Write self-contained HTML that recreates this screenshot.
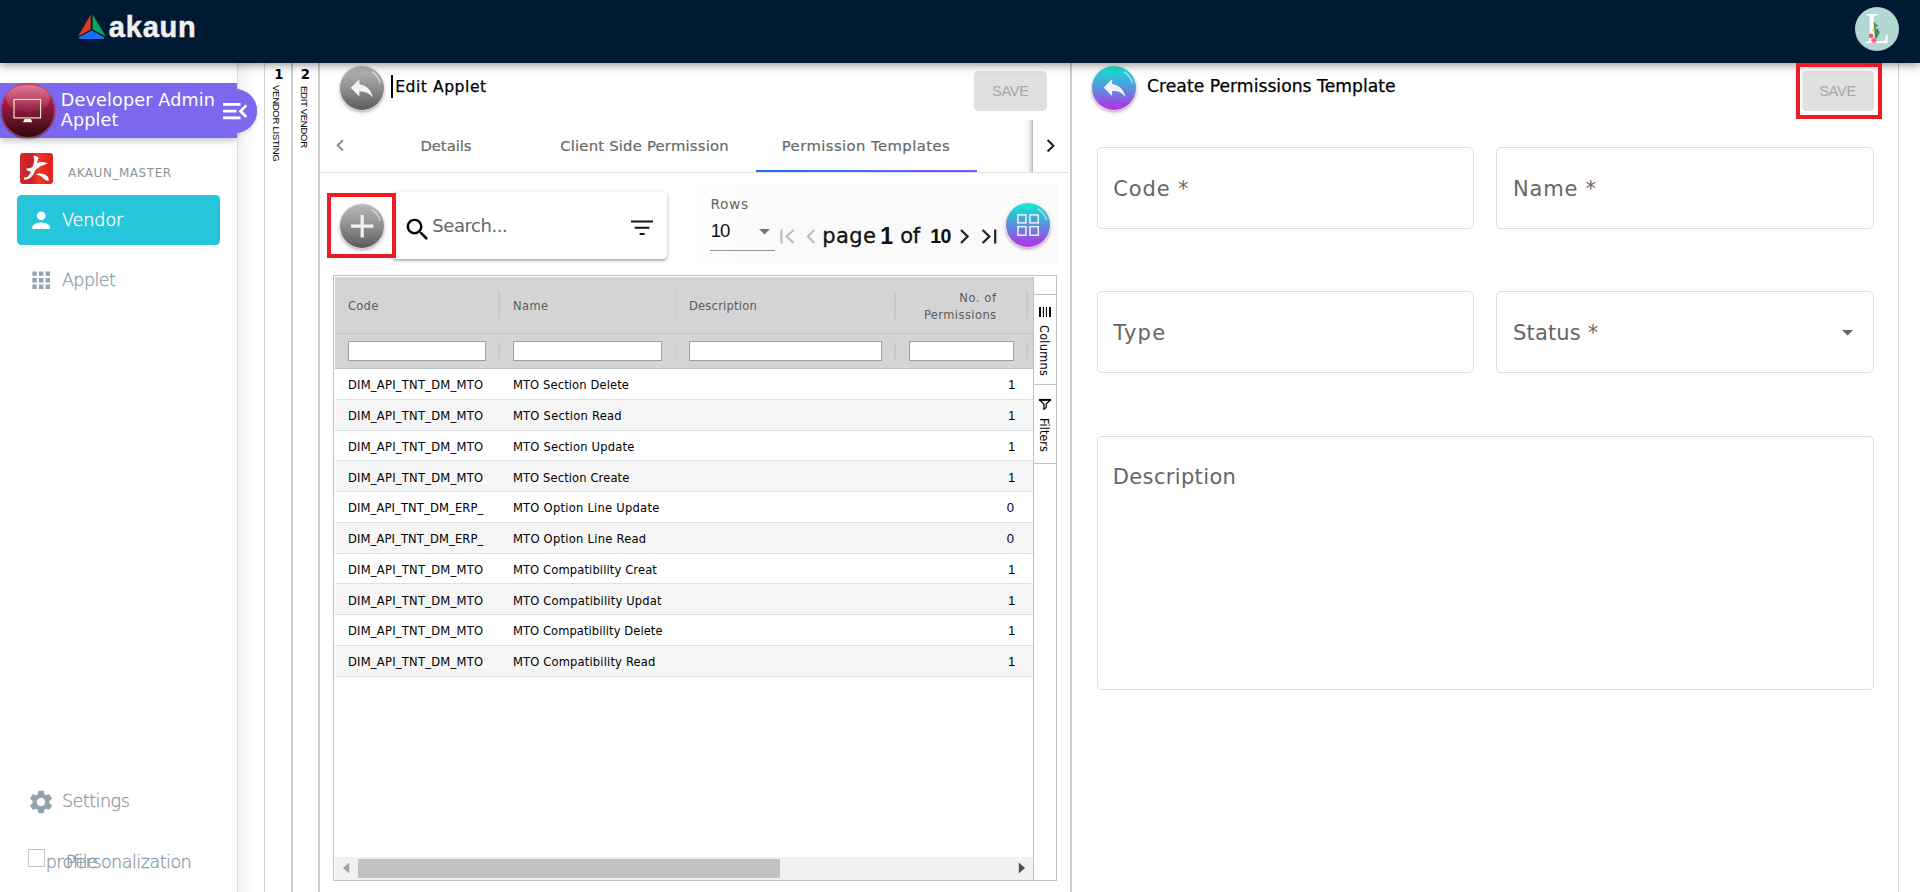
<!DOCTYPE html>
<html lang="en">
<head>
<meta charset="utf-8">
<title>akaun - Developer Admin Applet</title>
<style>
*{box-sizing:border-box;margin:0;padding:0}
html,body{width:1920px;height:892px;overflow:hidden;background:#fff}
body{position:relative;font-family:"DejaVu Sans","Liberation Sans",sans-serif;color:#000}
.abs{position:absolute}
.t{position:absolute;white-space:pre;line-height:1}
svg{position:absolute;overflow:visible}
#hdr{left:0;top:0;width:1920px;height:62.5px;background:#011a33;box-shadow:0 2px 9px rgba(0,0,0,.42);z-index:20}
#side{left:0;top:62px;width:238px;height:830px;background:#fff;border-right:1px solid #dcdcdc}
.vline{position:absolute;top:62px;height:830px;width:2px;background:#cfcfcf}
.vtxt{position:absolute;white-space:nowrap;transform-origin:0 0;transform:rotate(90deg);font-family:"Liberation Sans","DejaVu Sans",sans-serif;line-height:1;color:#000}
.circ{position:absolute;width:44px;height:44px;border-radius:50%;box-shadow:0 0 0 .8px rgba(245,225,240,.95),0 2px 3.5px rgba(40,20,40,.42);overflow:hidden}
.grayc{background:linear-gradient(180deg,#b9b9b9 0%,#8f8f8f 50%,#5c5c5c 100%)}
.gradc{background:linear-gradient(180deg,#0cf0d0 0%,#2cc4d6 22%,#4f9cdb 45%,#7a6fe0 68%,#a043e6 88%,#b432e8 100%)}
.savebtn{position:absolute;background:#e0e0e0;border-radius:4.4px}
.redbox{position:absolute;border:4.4px solid #ed1c24;z-index:30}
.field{position:absolute;border:1px solid #dedede;border-radius:5px;background:#fff}
.hsep{position:absolute;width:1.5px;background:#c3c9cc}
.finp{position:absolute;top:341.2px;height:19.6px;background:#fff;border:1px solid #95a5a6}
.row{position:absolute;left:335px;width:698px;height:30.78px;border-bottom:1px solid #dde2e6;background:#fff}
.row.alt{background:#f5f5f5}
</style>
</head>
<body>
<div id="hdr" class="abs">
  <svg style="left:76px;top:12px" width="32" height="30" viewBox="76 12 32 30">
    <polygon points="90.7,14.4 78,36.6 90.7,29.4" fill="#d63c28"/>
    <polygon points="92.5,14.4 105.8,36.4 92.5,29.2" fill="#0aa45c"/>
    <polygon points="91.6,30.6 104.6,37.6 103.6,39 79.6,39 78.6,37.6" fill="#1a6ef0"/>
  </svg>
  <span class="t" style="left:108.8px;top:13.1px;font-family:'Liberation Sans','DejaVu Sans',sans-serif;font-size:29px;font-weight:700;color:#f0f0f0;letter-spacing:0.80px;-webkit-text-stroke:.5px #f0f0f0;">akaun</span>
  <div class="abs" style="left:1855px;top:7px;width:44px;height:44px;border-radius:50%;background:#b2d8d4;overflow:hidden">
    <span class="t" style="left:10.2px;top:-.8px;font-family:'Liberation Serif','DejaVu Serif',serif;font-size:44.5px;color:#fff;transform:scaleX(.92);transform-origin:0 0">L</span>
    <svg style="left:.8px;top:0" width="44" height="44" viewBox="0 0 44 44">
      <path d="M18.5 16 L20 30 M21.5 22 L19.5 31 M23 25 L20 31" stroke="#3f8f3a" stroke-width="1.6" fill="none" stroke-linecap="round"/>
      <circle cx="20.6" cy="18.5" r="1.1" fill="#3f51b5"/><circle cx="21.6" cy="24" r="1" fill="#3f51b5"/>
      <circle cx="16.8" cy="23.6" r="1" fill="#f7d23c"/>
      <circle cx="15" cy="28.8" r="2.2" fill="#e8506a"/>
      <circle cx="18" cy="33.2" r="2.9" fill="#f08a9a"/><circle cx="18" cy="33.2" r="1.3" fill="#e8506a"/>
    </svg>
  </div>
</div>
<div id="side" class="abs"></div>
<div class="abs" style="left:238px;top:62px;width:26px;height:830px;background:linear-gradient(90deg,#f1f1f1 0,#fafafa 8px,#fff 19px)"></div>
<div class="abs" style="left:212.6px;top:88.7px;width:44.2px;height:44.2px;border-radius:50%;background:#7b68ee;box-shadow:0 2px 4px rgba(0,0,0,.12)"></div>
<div class="abs" style="left:0;top:83px;width:237.4px;height:54.8px;background:#7b68ee;box-shadow:0 4px 6px -1px rgba(40,60,80,.28)"></div>
<div class="abs" style="left:212.6px;top:88.7px;width:44.2px;height:44.2px;border-radius:50%;background:#7b68ee"></div>
<div class="abs" style="left:.6px;top:83px;width:54.4px;height:54.6px;border-radius:50%;background:linear-gradient(180deg,#cf3f68 0%,#b02249 28%,#84163a 52%,#55101f 76%,#2a070d 100%);box-shadow:inset 0 0 0 1px rgba(214,70,110,.75),0 1px 2px rgba(0,0,0,.4);overflow:hidden">
  <div class="abs" style="left:5px;top:2px;width:44px;height:27px;border-radius:50%;background:linear-gradient(180deg,rgba(255,255,255,.33),rgba(255,255,255,.04))"></div>
</div>
<svg style="left:0;top:83px" width="56" height="56" viewBox="0 83 56 56">
  <rect x="14" y="99.5" width="26.6" height="18.4" fill="none" stroke="#f6f0bb" stroke-width="1.15"/>
  <polygon points="24.6,119 30.8,119 32.4,122.2 23,122.2" fill="#fbf8e4"/>
</svg>
<span class="t" style="left:60.8px;top:91.6px;font-family:'DejaVu Sans','Liberation Sans',sans-serif;font-size:17.6px;color:#fff;letter-spacing:0.14px;">Developer Admin</span>
<span class="t" style="left:60.8px;top:111.7px;font-family:'DejaVu Sans','Liberation Sans',sans-serif;font-size:17.6px;color:#fff;letter-spacing:0.12px;">Applet</span>
<svg style="left:218.9px;top:94.8px" width="32.3" height="32.3" viewBox="0 0 24 24"><path fill="#fff" d="M3 18h13v-2H3v2zm0-5h10v-2H3v2zm0-7v2h13V6H3zm18 9.59L17.42 12 21 8.41 19.59 7l-5 5 5 5L21 15.59z"/></svg>
<div class="abs" style="left:20.2px;top:152.5px;width:32.7px;height:31.5px;border-radius:3px;background:linear-gradient(90deg,#cc2a2e 0%,#cb2027 32%,#ec3a24 56%,#e92623 80%,#e52224 100%)"></div>
<svg style="left:20.2px;top:152.5px" width="32.7" height="31.5" viewBox="0 0 32.7 31.5" fill="#fff">
  <path d="M13.4 2.7 C15.6 2.4 18.2 3.6 18.8 5 C17.6 6.8 17.4 8.6 17.2 10.6 C16.8 14.2 15.6 17.6 13.8 20.4 C12.4 22.8 11 24.4 9.4 25.4 C7.6 26.4 5.2 26.9 3.7 26.4 C4.2 25.2 4.7 24.4 5.1 23.5 C5.5 24.3 5.8 24.8 6.3 24.7 C8 23.8 9.6 21.8 10.6 19.6 C12 16.4 13.2 12.6 14.2 8.4 C14.6 6.6 14 4.6 13.4 2.7 Z"/>
  <path d="M5.8 16.1 C7.2 15.6 9.4 15.4 11.2 14.6 C14 13.2 16.6 10.4 19.4 9.3 C22 8.6 25.4 9.4 27.9 10.5 C25.4 11.3 23 12 21 13.1 C18.6 14.4 16.6 16.2 14.4 17.4 C12.4 18.4 10 18.6 8.8 18.2 C7.6 17.8 6.4 16.9 5.8 16.1 Z"/>
  <path d="M15.8 21.2 C18 20.4 21 20.4 23.4 21.1 C25.6 21.8 27.4 23 28.2 24.6 C28.8 25.8 28.9 27 28.6 28 C27.2 27.7 26 27.2 24.8 26.4 C22.8 25.2 21.4 23.6 19.6 22.6 C18.4 22 17 21.6 15.8 21.2 Z"/>
</svg>
<span class="t" style="left:67.9px;top:166.6px;font-family:'DejaVu Sans','Liberation Sans',sans-serif;font-size:12px;color:#8a9599;letter-spacing:0.54px;">AKAUN_MASTER</span>
<div class="abs" style="left:17px;top:195px;width:203px;height:50px;border-radius:4.4px;background:#26c6da"></div>
<svg style="left:27.8px;top:206.8px" width="26.4" height="26.4" viewBox="0 0 24 24"><path fill="#fff" d="M12 12c2.21 0 4-1.79 4-4s-1.790-4-4-4-4 1.790-4 4 1.790 4 4 4zm0 2c-2.670 0-8 1.340-8 4v2h16v-2c0-2.660-5.330-4-8-4z"/></svg>
<span class="t" style="left:61.9px;top:211.8px;font-family:'DejaVu Sans Light','DejaVu Sans','Liberation Sans',sans-serif;font-size:17.6px;color:#fff;letter-spacing:-0.07px;-webkit-text-stroke:.35px #fff;">Vendor</span>
<svg style="left:27.8px;top:266.8px" width="26.4" height="26.4" viewBox="0 0 24 24"><path fill="#90a4ae" d="M4 8h4V4H4v4zm6 12h4v-4h-4v4zm-6 0h4v-4H4v4zm0-6h4v-4H4v4zm6 0h4v-4h-4v4zm6-10v4h4V4h-4zm-6 4h4V4h-4v4zm6 6h4v-4h-4v4zm0 6h4v-4h-4v4z"/></svg>
<span class="t" style="left:61.9px;top:272.0px;font-family:'DejaVu Sans Light','DejaVu Sans','Liberation Sans',sans-serif;font-size:17.6px;color:#8b9aa3;letter-spacing:-0.60px;-webkit-text-stroke:.3px #8b9aa3;">Applet</span>
<svg style="left:27px;top:787.9px" width="28" height="28" viewBox="0 0 24 24"><path fill="#90a4ae" d="M19.140 12.940c.040-.300.060-.610.060-.940 0-.320-.020-.640-.070-.940l2.030-1.580c.180-.140.230-.410.120-.610l-1.920-3.320c-.120-.220-.370-.290-.590-.220l-2.390.960c-.500-.380-1.030-.700-1.620-.940l-.360-2.540c-.040-.240-.240-.410-.480-.410h-3.840c-.240 0-.430.170-.470.410l-.360 2.540c-.590.240-1.130.570-1.620.940l-2.390-.960c-.220-.080-.470 0-.590.220L2.740 8.870c-.120.210-.080.470.120.610l2.030 1.580c-.050.300-.090.630-.090.940s.020.640.070.940l-2.030 1.580c-.180.140-.230.410-.120.610l1.920 3.320c.120.220.370.290.590.220l2.390-.960c.500.380 1.030.700 1.620.940l.360 2.540c.050.240.240.410.480.410h3.840c.240 0 .440-.170.470-.410l.360-2.540c.590-.240 1.130-.560 1.620-.940l2.390.960c.220.080.470 0 .590-.220l1.920-3.320c.120-.220.070-.470-.120-.610l-2.010-1.580zM12 15.600c-1.980 0-3.600-1.620-3.600-3.600s1.620-3.600 3.600-3.600 3.600 1.620 3.600 3.600-1.620 3.600-3.600 3.600z"/></svg>
<span class="t" style="left:61.9px;top:793.0px;font-family:'DejaVu Sans Light','DejaVu Sans','Liberation Sans',sans-serif;font-size:17.6px;color:#8b9aa3;letter-spacing:-0.52px;-webkit-text-stroke:.3px #8b9aa3;">Settings</span>
<div class="abs" style="left:28.2px;top:849px;width:16.6px;height:17.6px;border:1px solid #c4c4c4;background:#fff"></div>
<span class="t" style="left:45.8px;top:854.0px;font-family:'DejaVu Sans Light','DejaVu Sans','Liberation Sans',sans-serif;font-size:17.6px;color:#8b9aa3;letter-spacing:-0.60px;-webkit-text-stroke:.3px #8b9aa3;">profile</span>
<span class="t" style="left:65.8px;top:854.0px;font-family:'DejaVu Sans Light','DejaVu Sans','Liberation Sans',sans-serif;font-size:17.6px;color:#8b9aa3;letter-spacing:-0.53px;-webkit-text-stroke:.3px #8b9aa3;">Personalization</span>

<div class="vline" style="left:264px;width:1px;background:#d2d2d2"></div><div class="vline" style="left:291px"></div>
<span class="t" style="left:274.3px;top:67.6px;font-family:'DejaVu Sans','Liberation Sans',sans-serif;font-size:13.2px;font-weight:700;">1</span>
<span class="t" style="left:300.8px;top:67.6px;font-family:'DejaVu Sans','Liberation Sans',sans-serif;font-size:13.2px;font-weight:700;">2</span>
<span class="vtxt" style="left:281.3px;top:84.6px;font-size:9.6px;letter-spacing:-.33px">VENDOR LISTING</span>
<span class="vtxt" style="left:309.2px;top:85.8px;font-size:9.6px;letter-spacing:-.33px">EDIT VENDOR</span>

<div class="abs" style="left:318px;top:62px;width:752px;height:830px;background:#fff;border-left:2px solid #cfcfcf"></div>
<div class="circ grayc" style="left:340px;top:66px"><svg style="left:0;top:0" width="44" height="44" viewBox="0 0 44 44"><path d="M32.3 6.1 A19 19 0 0 1 40.2 16.4" fill="none" stroke="rgba(255,255,255,.55)" stroke-width="1.5" stroke-linecap="round"/></svg></div>
<svg style="left:347.3px;top:72.6px" width="29.7" height="29.7" viewBox="0 0 24 24"><path fill="#f2f2f2" d="M10 9V5l-7 7 7 7v-4.1c5 0 8.5 1.6 11 5.1-1-5-4-10-11-11z"/></svg>
<div class="abs" style="left:390.6px;top:75.2px;width:2px;height:22.4px;background:#000"></div>
<span class="t" style="left:395.2px;top:79.6px;font-family:'DejaVu Sans','Liberation Sans',sans-serif;font-size:15.6px;letter-spacing:0.53px;-webkit-text-stroke:.25px #000;">Edit Applet</span>
<div class="savebtn" style="left:974.2px;top:71.2px;width:72.8px;height:39.5px"></div>
<span class="t" style="left:992.0px;top:84.3px;font-family:'Liberation Sans','DejaVu Sans',sans-serif;font-size:14.6px;color:#a8a8a8;letter-spacing:-0.27px;">SAVE</span>
<svg style="left:334px;top:138px" width="14" height="16" viewBox="334 138 14 16"><path d="M343 140.2 L337.6 145.3 L343 150.4" fill="none" stroke="#8e8e8e" stroke-width="2"/></svg>
<span class="t" style="left:420.4px;top:138.8px;font-family:'DejaVu Sans','Liberation Sans',sans-serif;font-size:14.8px;color:#6a6a6a;letter-spacing:-0.02px;-webkit-text-stroke:.2px #6a6a6a;">Details</span>
<span class="t" style="left:560.2px;top:138.8px;font-family:'DejaVu Sans','Liberation Sans',sans-serif;font-size:14.8px;color:#6a6a6a;letter-spacing:0.21px;-webkit-text-stroke:.2px #6a6a6a;">Client Side Permission</span>
<span class="t" style="left:781.8px;top:138.8px;font-family:'DejaVu Sans','Liberation Sans',sans-serif;font-size:14.8px;color:#6a6a6a;letter-spacing:0.43px;-webkit-text-stroke:.2px #6a6a6a;">Permission Templates</span>
<div class="abs" style="left:321px;top:172px;width:747px;height:1px;background:#e0e0e0"></div>
<div class="abs" style="left:756px;top:169.8px;width:221px;height:2.2px;background:linear-gradient(90deg,#1a73e8 0%,#4a6cf0 50%,#8257ee 100%)"></div>
<div class="abs" style="left:1021px;top:119.5px;width:12px;height:52.5px;background:linear-gradient(90deg,rgba(0,0,0,0) 0,rgba(0,0,0,.035) 60%,rgba(0,0,0,.2) 92%,rgba(0,0,0,.32) 100%)"></div><div class="abs" style="left:1033px;top:119.5px;width:35px;height:52.5px;background:#fff"></div>
<svg style="left:1043px;top:137px" width="16" height="18" viewBox="1042 137 16 18"><path d="M1046.6 140 L1052.4 145.7 L1046.6 151.4" fill="none" stroke="#222" stroke-width="2.1"/></svg>

<div class="abs" style="left:668px;top:184px;width:389px;height:80px;background:linear-gradient(90deg,rgba(250,250,250,0) 12px,#fafafa 100px)"></div>
<div class="abs" style="left:392px;top:192.4px;width:275.4px;height:66.6px;border-radius:4.4px;background:#fff;box-shadow:0 2px 2px rgba(0,0,0,.2),0 1px 5px rgba(0,0,0,.17)"></div>
<div class="abs" style="left:327.4px;top:192.5px;width:68.4px;height:65px;background:#fff"></div><div class="redbox" style="left:327.4px;top:192.5px;width:68.4px;height:65px"></div>
<div class="circ grayc" style="left:339.9px;top:203.8px"><svg style="left:0;top:0" width="44" height="44" viewBox="0 0 44 44"><path d="M32.3 6.1 A19 19 0 0 1 40.2 16.4" fill="none" stroke="rgba(255,255,255,.55)" stroke-width="1.5" stroke-linecap="round"/></svg></div>
<svg style="left:342.7px;top:206.6px" width="38.4" height="38.4" viewBox="0 0 24 24"><path fill="#f2f2f2" d="M19 13h-6v6h-2v-6H5v-2h6V5h2v6h6v2z"/></svg>
<svg style="left:403.3px;top:215.4px" width="29.2" height="29.2" viewBox="0 0 24 24"><path fill="#000" d="M15.5 14h-.79l-.28-.27C15.410 12.590 16 11.110 16 9.500 16 5.910 13.090 3 9.500 3S3 5.910 3 9.500 5.910 16 9.500 16c1.610 0 3.090-.590 4.230-1.570l.27.280v.79l5 4.990L20.490 19l-4.990-5zm-6 0C7.010 14 5 11.990 5 9.500S7.010 5 9.500 5 14 7.010 14 9.500 11.990 14 9.500 14z"/></svg>
<span class="t" style="left:432.3px;top:217.0px;font-family:'DejaVu Sans','Liberation Sans',sans-serif;font-size:18px;color:#666;letter-spacing:-0.44px;">Search...</span>
<svg style="left:630px;top:219px" width="24" height="18" viewBox="630 219 24 18"><path fill="#111" d="M631 220.6h22v1.9h-22z M634.7 226.8h14.7v1.9h-14.7z M639.6 233.1h5v1.9h-5z"/></svg>
<span class="t" style="left:710.4px;top:198.1px;font-family:'DejaVu Sans','Liberation Sans',sans-serif;font-size:13.8px;color:#666;letter-spacing:0.60px;">Rows</span>
<span class="t" style="left:710.7px;top:222.4px;font-family:'Liberation Sans','DejaVu Sans',sans-serif;font-size:18.6px;color:#111;letter-spacing:-1.00px;">10</span>
<svg style="left:759.3px;top:229px" width="11" height="5.5" viewBox="0 0 10 5"><path d="M0 0h10L5 5z" fill="#777"/></svg>
<div class="abs" style="left:710px;top:250px;width:65px;height:1px;background:#949494"></div>
<svg style="left:778px;top:227px" width="220" height="20" viewBox="778 227 220 20" fill="none" stroke-width="2.2">
  <path d="M781.4 229.6V243.4 M793.6 230 L786.6 236.5 L793.6 243" stroke="#bdbdbd"/>
  <path d="M814.4 230 L807.8 236.5 L814.4 243" stroke="#bdbdbd"/>
  <path d="M961 230 L967.6 236.5 L961 243" stroke="#222"/>
  <path d="M982.6 230 L989.4 236.5 L982.6 243 M995.2 229.6V243.4" stroke="#222"/>
</svg>
<span class="t" style="left:822.2px;top:226.4px;font-family:'DejaVu Sans','Liberation Sans',sans-serif;font-size:21px;color:#111;letter-spacing:0.41px;-webkit-text-stroke:.3px #111;">page</span>
<span class="t" style="left:880.3px;top:224.6px;font-family:'Liberation Sans','DejaVu Sans',sans-serif;font-size:23.2px;font-weight:700;color:#111;">1</span>
<span class="t" style="left:900.2px;top:226.4px;font-family:'DejaVu Sans','Liberation Sans',sans-serif;font-size:21px;color:#111;letter-spacing:-0.29px;-webkit-text-stroke:.3px #111;">of</span>
<span class="t" style="left:930.2px;top:227.4px;font-family:'Liberation Sans','DejaVu Sans',sans-serif;font-size:19.6px;font-weight:700;color:#111;letter-spacing:-0.66px;">10</span>
<div class="circ gradc" style="left:1006.2px;top:202.9px"><svg style="left:0;top:0" width="44" height="44" viewBox="0 0 44 44"><path d="M32.3 6.1 A19 19 0 0 1 40.2 16.4" fill="none" stroke="rgba(255,255,255,.55)" stroke-width="1.5" stroke-linecap="round"/></svg></div>
<svg style="left:1014px;top:212px" width="28" height="28" viewBox="1014 212 28 28" fill="none" stroke="#f4f1ff" stroke-width="1.45">
  <rect x="1017.9" y="214.9" width="8" height="8"/><rect x="1029.9" y="214.9" width="8.4" height="8"/>
  <rect x="1017.9" y="226.7" width="8" height="8.5"/><rect x="1029.9" y="226.7" width="8.4" height="8.5"/>
</svg>

<div class="abs" style="left:333px;top:275px;width:724px;height:606px;border:1px solid #bdc3c7;background:#fff"></div>
<div class="abs" style="left:335px;top:277px;width:698px;height:92px;background:#d4d4d4;border-bottom:1px solid #bdc3c7"></div>
<div class="abs" style="left:335px;top:333px;width:698px;height:1px;background:#bdc3c7"></div>
<div class="hsep" style="left:498.2px;top:291px;height:28px"></div>
<div class="hsep" style="left:498.2px;top:342.5px;height:16px"></div>
<div class="hsep" style="left:674.6px;top:291px;height:28px"></div>
<div class="hsep" style="left:674.6px;top:342.5px;height:16px"></div>
<div class="hsep" style="left:894.2px;top:291px;height:28px"></div>
<div class="hsep" style="left:894.2px;top:342.5px;height:16px"></div>
<div class="hsep" style="left:1026.4px;top:291px;height:28px"></div>
<div class="hsep" style="left:1026.4px;top:342.5px;height:16px"></div>
<div class="finp" style="left:348px;width:137.8px"></div>
<div class="finp" style="left:513px;width:148.8px"></div>
<div class="finp" style="left:689.2px;width:192.6px"></div>
<div class="finp" style="left:909px;width:104.8px"></div>
<span class="t" style="left:347.9px;top:300.0px;font-family:'DejaVu Sans Condensed','Liberation Sans',sans-serif;font-size:12.8px;color:#5c5c5c;letter-spacing:0.28px;">Code</span>
<span class="t" style="left:512.9px;top:300.0px;font-family:'DejaVu Sans Condensed','Liberation Sans',sans-serif;font-size:12.8px;color:#5c5c5c;letter-spacing:0.41px;">Name</span>
<span class="t" style="left:688.9px;top:300.0px;font-family:'DejaVu Sans Condensed','Liberation Sans',sans-serif;font-size:12.8px;color:#5c5c5c;letter-spacing:0.24px;">Description</span>
<span class="t" style="left:959.3px;top:292.0px;font-family:'DejaVu Sans Condensed','Liberation Sans',sans-serif;font-size:12.8px;color:#5c5c5c;letter-spacing:0.56px;">No. of</span>
<span class="t" style="left:923.9px;top:308.7px;font-family:'DejaVu Sans Condensed','Liberation Sans',sans-serif;font-size:12.8px;color:#5c5c5c;letter-spacing:0.42px;">Permissions</span>
<div class="row" style="top:369.00px"></div>
<span class="t" style="left:347.9px;top:379.2px;font-family:'DejaVu Sans Condensed','Liberation Sans',sans-serif;font-size:12.8px;letter-spacing:0.25px;">DIM_API_TNT_DM_MTO</span>
<span class="t" style="left:512.9px;top:379.2px;font-family:'DejaVu Sans Condensed','Liberation Sans',sans-serif;font-size:12.8px;letter-spacing:0.12px;">MTO Section Delete</span>
<span class="t" style="left:1008.1px;top:378.2px;font-family:'Liberation Sans','DejaVu Sans',sans-serif;font-size:13px;">1</span>
<div class="row alt" style="top:399.78px"></div>
<span class="t" style="left:347.9px;top:410.0px;font-family:'DejaVu Sans Condensed','Liberation Sans',sans-serif;font-size:12.8px;letter-spacing:0.25px;">DIM_API_TNT_DM_MTO</span>
<span class="t" style="left:512.9px;top:410.0px;font-family:'DejaVu Sans Condensed','Liberation Sans',sans-serif;font-size:12.8px;letter-spacing:0.25px;">MTO Section Read</span>
<span class="t" style="left:1008.1px;top:409.0px;font-family:'Liberation Sans','DejaVu Sans',sans-serif;font-size:13px;">1</span>
<div class="row" style="top:430.56px"></div>
<span class="t" style="left:347.9px;top:440.8px;font-family:'DejaVu Sans Condensed','Liberation Sans',sans-serif;font-size:12.8px;letter-spacing:0.25px;">DIM_API_TNT_DM_MTO</span>
<span class="t" style="left:512.9px;top:440.8px;font-family:'DejaVu Sans Condensed','Liberation Sans',sans-serif;font-size:12.8px;letter-spacing:0.21px;">MTO Section Update</span>
<span class="t" style="left:1008.1px;top:439.8px;font-family:'Liberation Sans','DejaVu Sans',sans-serif;font-size:13px;">1</span>
<div class="row alt" style="top:461.34px"></div>
<span class="t" style="left:347.9px;top:471.5px;font-family:'DejaVu Sans Condensed','Liberation Sans',sans-serif;font-size:12.8px;letter-spacing:0.25px;">DIM_API_TNT_DM_MTO</span>
<span class="t" style="left:512.9px;top:471.5px;font-family:'DejaVu Sans Condensed','Liberation Sans',sans-serif;font-size:12.8px;letter-spacing:0.12px;">MTO Section Create</span>
<span class="t" style="left:1008.1px;top:470.5px;font-family:'Liberation Sans','DejaVu Sans',sans-serif;font-size:13px;">1</span>
<div class="row" style="top:492.12px"></div>
<span class="t" style="left:347.9px;top:502.3px;font-family:'DejaVu Sans Condensed','Liberation Sans',sans-serif;font-size:12.8px;letter-spacing:0.14px;">DIM_API_TNT_DM_ERP_</span>
<span class="t" style="left:512.9px;top:502.3px;font-family:'DejaVu Sans Condensed','Liberation Sans',sans-serif;font-size:12.8px;letter-spacing:0.25px;">MTO Option Line Update</span>
<span class="t" style="left:1006.7px;top:501.3px;font-family:'Liberation Sans','DejaVu Sans',sans-serif;font-size:13px;">0</span>
<div class="row alt" style="top:522.90px"></div>
<span class="t" style="left:347.9px;top:533.1px;font-family:'DejaVu Sans Condensed','Liberation Sans',sans-serif;font-size:12.8px;letter-spacing:0.14px;">DIM_API_TNT_DM_ERP_</span>
<span class="t" style="left:512.9px;top:533.1px;font-family:'DejaVu Sans Condensed','Liberation Sans',sans-serif;font-size:12.8px;letter-spacing:0.26px;">MTO Option Line Read</span>
<span class="t" style="left:1006.7px;top:532.1px;font-family:'Liberation Sans','DejaVu Sans',sans-serif;font-size:13px;">0</span>
<div class="row" style="top:553.68px"></div>
<span class="t" style="left:347.9px;top:563.9px;font-family:'DejaVu Sans Condensed','Liberation Sans',sans-serif;font-size:12.8px;letter-spacing:0.25px;">DIM_API_TNT_DM_MTO</span>
<span class="t" style="left:512.9px;top:563.9px;font-family:'DejaVu Sans Condensed','Liberation Sans',sans-serif;font-size:12.8px;letter-spacing:0.13px;">MTO Compatibility Creat</span>
<span class="t" style="left:1008.1px;top:562.9px;font-family:'Liberation Sans','DejaVu Sans',sans-serif;font-size:13px;">1</span>
<div class="row alt" style="top:584.46px"></div>
<span class="t" style="left:347.9px;top:594.7px;font-family:'DejaVu Sans Condensed','Liberation Sans',sans-serif;font-size:12.8px;letter-spacing:0.25px;">DIM_API_TNT_DM_MTO</span>
<span class="t" style="left:512.9px;top:594.7px;font-family:'DejaVu Sans Condensed','Liberation Sans',sans-serif;font-size:12.8px;letter-spacing:0.19px;">MTO Compatibility Updat</span>
<span class="t" style="left:1008.1px;top:593.7px;font-family:'Liberation Sans','DejaVu Sans',sans-serif;font-size:13px;">1</span>
<div class="row" style="top:615.24px"></div>
<span class="t" style="left:347.9px;top:625.4px;font-family:'DejaVu Sans Condensed','Liberation Sans',sans-serif;font-size:12.8px;letter-spacing:0.25px;">DIM_API_TNT_DM_MTO</span>
<span class="t" style="left:512.9px;top:625.4px;font-family:'DejaVu Sans Condensed','Liberation Sans',sans-serif;font-size:12.8px;letter-spacing:0.08px;">MTO Compatibility Delete</span>
<span class="t" style="left:1008.1px;top:624.4px;font-family:'Liberation Sans','DejaVu Sans',sans-serif;font-size:13px;">1</span>
<div class="row alt" style="top:646.02px"></div>
<span class="t" style="left:347.9px;top:656.2px;font-family:'DejaVu Sans Condensed','Liberation Sans',sans-serif;font-size:12.8px;letter-spacing:0.25px;">DIM_API_TNT_DM_MTO</span>
<span class="t" style="left:512.9px;top:656.2px;font-family:'DejaVu Sans Condensed','Liberation Sans',sans-serif;font-size:12.8px;letter-spacing:0.17px;">MTO Compatibility Read</span>
<span class="t" style="left:1008.1px;top:655.2px;font-family:'Liberation Sans','DejaVu Sans',sans-serif;font-size:13px;">1</span>
<div class="abs" style="left:335px;top:857.2px;width:698px;height:22.6px;background:#f1f1f1"></div>
<div class="abs" style="left:357.8px;top:859.4px;width:422.2px;height:18.4px;background:#c1c1c1"></div>
<svg style="left:342px;top:862px" width="8" height="12" viewBox="0 0 8 12"><path d="M7.2 0.6V11.4L1 6z" fill="#a3a3a3"/></svg>
<svg style="left:1018.4px;top:862px" width="8" height="12" viewBox="0 0 8 12"><path d="M0.8 0.6V11.4L7 6z" fill="#505050"/></svg>
<div class="abs" style="left:1033px;top:277px;width:1px;height:603px;background:#bdc3c7"></div>
<div class="abs" style="left:1034px;top:294px;width:22px;height:1px;background:#bdc3c7"></div>
<div class="abs" style="left:1034px;top:384px;width:22px;height:1.4px;background:#bdc3c7"></div>
<div class="abs" style="left:1034px;top:463px;width:22px;height:1px;background:#bdc3c7"></div>
<svg style="left:1038px;top:305px" width="14" height="13" viewBox="1038 305 14 13"><path d="M1039 307h2v10h-2z M1042.9 307h1.1v10h-1.1z M1045.9 307h1.1v10h-1.1z M1049 307h2v10h-2z" fill="#000"/></svg>
<span class="vtxt" style="left:1050.4px;top:325.2px;font-family:'DejaVu Sans Condensed','Liberation Sans',sans-serif;font-size:12.6px;letter-spacing:.25px">Columns</span>
<svg style="left:1038px;top:397px" width="14" height="14" viewBox="1038 397 14 14"><path d="M1039 399.9H1051 M1040.3 400.6 L1043.9 404 V409.4 L1046.2 407.4 V404 L1049.7 400.6" fill="none" stroke="#000" stroke-width="1.25" stroke-linejoin="round"/><path d="M1038.9 398.9h12.2v2h-12.2z" fill="#000"/></svg>
<span class="vtxt" style="left:1050.4px;top:418.2px;font-family:'DejaVu Sans Condensed','Liberation Sans',sans-serif;font-size:12.6px;letter-spacing:0">Filters</span>
<div class="abs" style="left:1070px;top:62px;width:829px;height:830px;background:#fff;border-left:2px solid #cdcdcd;border-right:1px solid #d4d4d4"></div>
<div class="circ gradc" style="left:1092.1px;top:65.9px"><svg style="left:0;top:0" width="44" height="44" viewBox="0 0 44 44"><path d="M32.3 6.1 A19 19 0 0 1 40.2 16.4" fill="none" stroke="rgba(255,255,255,.55)" stroke-width="1.5" stroke-linecap="round"/></svg></div>
<svg style="left:1099.5px;top:72.8px" width="29.2" height="29.2" viewBox="0 0 24 24"><path fill="#f2f2f2" d="M10 9V5l-7 7 7 7v-4.1c5 0 8.5 1.6 11 5.1-1-5-4-10-11-11z"/></svg>
<span class="t" style="left:1147.0px;top:77.9px;font-family:'DejaVu Sans','Liberation Sans',sans-serif;font-size:17.2px;letter-spacing:0.02px;-webkit-text-stroke:.25px #000;">Create Permissions Template</span>
<div class="redbox" style="left:1796.2px;top:63.2px;width:85.8px;height:55.6px"></div>
<div class="savebtn" style="left:1802.3px;top:71.2px;width:71.5px;height:39.5px"></div>
<span class="t" style="left:1819.2px;top:83.8px;font-family:'Liberation Sans','DejaVu Sans',sans-serif;font-size:14.6px;color:#a8a8a8;letter-spacing:-0.30px;">SAVE</span>
<div class="field" style="left:1097px;top:147px;width:377px;height:81.6px"></div>
<div class="field" style="left:1496px;top:147px;width:378px;height:81.6px"></div>
<div class="field" style="left:1097px;top:291.4px;width:377px;height:81.2px"></div>
<div class="field" style="left:1496px;top:291.4px;width:378px;height:81.2px"></div>
<div class="field" style="left:1097px;top:436px;width:777px;height:254.4px"></div>
<span class="t" style="left:1113.2px;top:178.6px;font-family:'DejaVu Sans','Liberation Sans',sans-serif;font-size:21px;color:#666;letter-spacing:0.89px;">Code *</span>
<span class="t" style="left:1513.0px;top:178.6px;font-family:'DejaVu Sans','Liberation Sans',sans-serif;font-size:21px;color:#666;letter-spacing:0.79px;">Name *</span>
<span class="t" style="left:1113.2px;top:322.6px;font-family:'DejaVu Sans','Liberation Sans',sans-serif;font-size:21px;color:#666;letter-spacing:1.21px;">Type</span>
<span class="t" style="left:1513.0px;top:322.6px;font-family:'DejaVu Sans','Liberation Sans',sans-serif;font-size:21px;color:#666;letter-spacing:0.17px;">Status *</span>
<svg style="left:1841.6px;top:329.8px" width="11.2" height="5.6" viewBox="0 0 10 5"><path d="M0 0h10L5 5z" fill="#666"/></svg>
<span class="t" style="left:1112.8px;top:467.2px;font-family:'DejaVu Sans','Liberation Sans',sans-serif;font-size:21px;color:#666;letter-spacing:0.35px;">Description</span>

</body>
</html>
